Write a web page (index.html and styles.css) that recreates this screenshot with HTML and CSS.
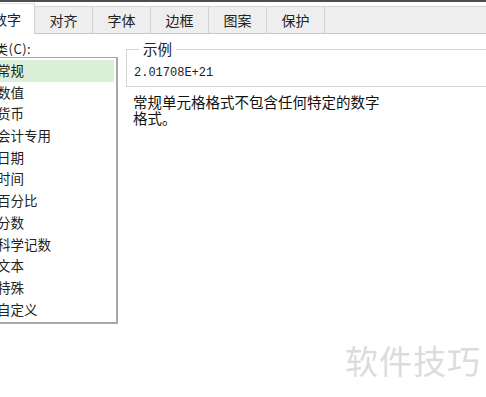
FILE: index.html
```html
<!DOCTYPE html>
<html lang="zh-CN">
<head>
    <meta charset="UTF-8">
    <title>设置单元格格式 - 数字</title>
    <link rel="stylesheet" href="styles.css">
</head>
<body>
    <div class="topline"></div>
    <div class="tabs">
        <div class="tab active">数字</div>
        <div class="tab">对齐</div>
        <div class="tab">字体</div>
        <div class="tab">边框</div>
        <div class="tab">图案</div>
        <div class="tab">保护</div>
    </div>

    <div class="panel">
        <div class="category">
            <div class="cat-label">类(C):</div>
            <ul class="listbox">
                <li class="selected">常规</li>
                <li>数值</li>
                <li>货币</li>
                <li>会计专用</li>
                <li>日期</li>
                <li>时间</li>
                <li>百分比</li>
                <li>分数</li>
                <li>科学记数</li>
                <li>文本</li>
                <li>特殊</li>
                <li>自定义</li>
            </ul>
        </div>

        <div class="detail">
            <fieldset class="sample">
                <legend>示例</legend>
                <div class="sample-value">2.01708E+21</div>
            </fieldset>
            <p class="desc">常规单元格格式不包含任何特定的数字<br>格式。</p>
        </div>
    </div>

    <div class="watermark">软件技巧</div>
</body>
</html>
```

FILE: styles.css
```css
body {
    margin: 0;
    width: 486px;
    height: 397px;
    overflow: hidden;
    background: #fff;
    color: #1a1a1a;
    font-family: "Noto Sans CJK SC", "Noto Sans", sans-serif;
    position: relative;
}

.topline {
    height: 2px;
    background: #4d4d4d;
}

.tabs {
    display: flex;
    height: 26px;
    margin-top: 4px;
    border-top: 1px solid #d6d6d6;
    border-bottom: 1px solid #c8c8c8;
    background: #eeeeee;
}

.tab {
    width: 57px;
    border-right: 1px solid #d2d2d2;
    font-size: 14px;
    line-height: 26px;
    text-align: center;
    color: #222;
}

.tab.active {
    width: 34px;
    margin-top: -4px;
    margin-bottom: -1px;
    line-height: 30px;
    text-align: left;
    text-indent: -7px;
    white-space: nowrap;
    overflow: hidden;
    background: #fff;
    border-top: 1px solid #e2e2e2;
    border-right: 1px solid #d2d2d2;
}

.panel {
    display: flex;
    gap: 8px;
}

.category {
    margin-left: -10px;
    width: 128px;
}

.cat-label {
    font-size: 13px;
    line-height: 16px;
    margin-top: 7px;
    padding-left: 5px;
    letter-spacing: 0.5px;
}

.listbox {
    list-style: none;
    margin: 0;
    padding: 2px 2px 3px 0;
    height: 259px;
    border: 1px solid #a8a8a8;
    border-right-width: 2px;
    border-bottom-width: 2px;
}

.listbox li {
    height: 21.7px;
    line-height: 21.7px;
    padding-left: 6px;
    font-size: 13.5px;
    color: #222;
}

.listbox li.selected {
    background: #dcefd8;
}

.detail {
    flex: 1;
    margin-top: 7px;
}

.sample {
    margin: 0 -20px 0 0;
    padding: 7px 7px 4px;
    border: 1px solid #d4d4d4;
    border-right: none;
}

.sample legend {
    padding: 0 4px;
    margin-left: 5px;
    font-size: 14.5px;
    line-height: 16px;
    color: #222;
}

.sample-value {
    font-family: "Liberation Mono", monospace;
    font-size: 12px;
    line-height: 18px;
    color: #222;
}

.desc {
    margin: 7px 0 0 7px;
    font-size: 14.5px;
    line-height: 16px;
    color: #111;
}

.watermark {
    position: absolute;
    left: 345px;
    top: 336px;
    font-size: 33px;
    letter-spacing: 1px;
    color: #dcdcdc;
}
```
